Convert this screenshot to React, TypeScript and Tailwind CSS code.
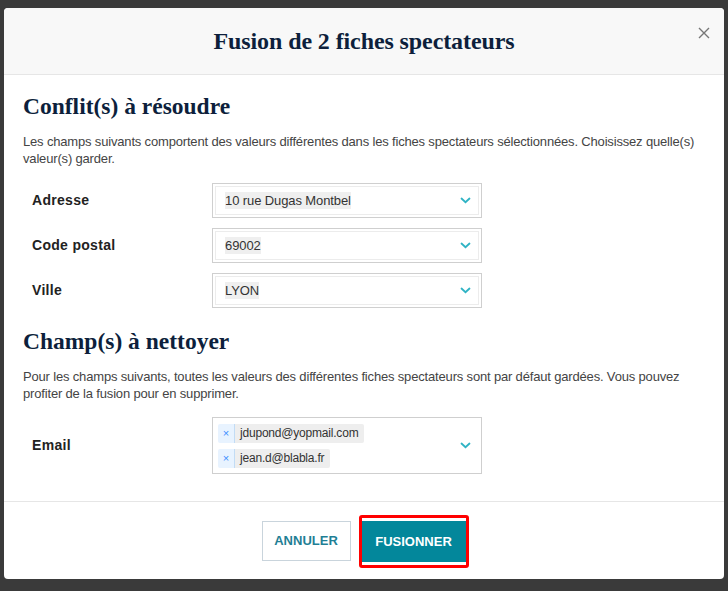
import React from 'react';

const Chevron = () => (
  <svg width="11" height="7" viewBox="0 0 11 7" className="shrink-0">
    <path d="M1.5 1.5 L5.5 5.2 L9.5 1.5" fill="none" stroke="#2fb3c4" strokeWidth="1.8" strokeLinecap="round" />
  </svg>
);

const SelectRow = ({ label, value }: { label: string; value: string }) => (
  <div className="flex items-center pl-[9px]">
    <div className="w-[180px] text-[14px] font-bold text-[#222] tracking-[0.3px]">{label}</div>
    <div className="w-[270px] h-[35px] border border-[#cfcfcf] shadow-[inset_0_0_0_2px_#fff,inset_0_0_0_3px_#ececec] flex items-center justify-between pl-[12px] pr-[10px]">
      <span className="text-[13px] text-[#333] bg-[#efefef] leading-[17px] tracking-[-0.1px]">{value}</span>
      <Chevron />
    </div>
  </div>
);

const Chip = ({ text }: { text: string }) => (
  <div className="inline-flex h-[19px] items-stretch rounded-[2px] overflow-hidden">
    <span className="w-[17px] bg-[#e8f3ff] border-r border-[#c2dcf5] text-[#3d8eff] text-[11px] flex items-center justify-center">×</span>
    <span className="bg-[#eeeeee] text-[#333] text-[12px] tracking-[-0.2px] pl-[5px] pr-[6px] flex items-center">{text}</span>
  </div>
);

const serif = { fontFamily: '"Liberation Serif", "Times New Roman", serif' };

export default function App() {
  return (
    <div className="w-[728px] h-[591px] bg-[#3a3a3a] pt-[8px] pl-[4px] overflow-hidden" style={{ fontFamily: '"Liberation Sans", Arial, sans-serif' }}>
      <div className="w-[720px] h-[571px] bg-white rounded-[4px] overflow-hidden flex flex-col">
        {/* Header */}
        <div className="relative h-[67px] bg-[#f8f8f8] border-b border-[#e6e6e6] flex items-center justify-center">
          <h1 className="text-[24px] font-bold text-[#0d1f3c] tracking-[-0.1px]" style={serif}>
            Fusion de 2 fiches spectateurs
          </h1>
          <button className="absolute right-[13px] top-[18px] w-[14px] h-[14px] flex items-center justify-center">
            <svg width="12" height="12" viewBox="0 0 12 12">
              <path d="M1 1 L11 11 M11 1 L1 11" stroke="#777" strokeWidth="1.4" />
            </svg>
          </button>
        </div>

        {/* Body */}
        <div className="flex-1 px-[19px] pt-[17px]">
          <h2 className="text-[23.5px] leading-[28px] font-bold text-[#0d1f3c]" style={serif}>
            Conflit(s) à résoudre
          </h2>
          <p className="mt-[13px] text-[13px] leading-[17px] text-[#444] tracking-[-0.17px]">
            Les champs suivants comportent des valeurs différentes dans les fiches spectateurs sélectionnées. Choisissez quelle(s) valeur(s) garder.
          </p>
          <div className="mt-[16px] flex flex-col gap-[10px]">
            <SelectRow label="Adresse" value="10 rue Dugas Montbel" />
            <SelectRow label="Code postal" value="69002" />
            <SelectRow label="Ville" value="LYON" />
          </div>

          <h2 className="mt-[19px] text-[23.5px] leading-[28px] font-bold text-[#0d1f3c]" style={serif}>
            Champ(s) à nettoyer
          </h2>
          <p className="mt-[13px] text-[13px] leading-[17px] text-[#444] tracking-[-0.17px]">
            Pour les champs suivants, toutes les valeurs des différentes fiches spectateurs sont par défaut gardées. Vous pouvez profiter de la fusion pour en supprimer.
          </p>
          <div className="mt-[15px] flex items-center pl-[9px]">
            <div className="w-[180px] text-[14px] font-bold text-[#222] tracking-[0.3px]">Email</div>
            <div className="w-[270px] h-[57px] border border-[#cfcfcf] flex items-center justify-between pl-[5px] pr-[10px]">
              <div className="flex flex-col items-start gap-[6px]">
                <Chip text="jdupond@yopmail.com" />
                <Chip text="jean.d@blabla.fr" />
              </div>
              <Chevron />
            </div>
          </div>
        </div>

        {/* Footer */}
        <div className="h-[78px] border-t border-[#e6e6e6] flex items-start justify-center gap-[8px] pt-[13px] pl-[2px]">
          <button className="mt-[6px] w-[89px] h-[40px] border border-[#c9d4dc] bg-white text-[#1f7f95] text-[13px] font-bold">
            ANNULER
          </button>
          <div className="border-[3px] border-[#ff0000] rounded-[3px] py-[3px]">
            <button className="w-[104px] h-[41px] bg-[#03879b] text-white text-[13px] font-bold">
              FUSIONNER
            </button>
          </div>
        </div>
      </div>
    </div>
  );
}
